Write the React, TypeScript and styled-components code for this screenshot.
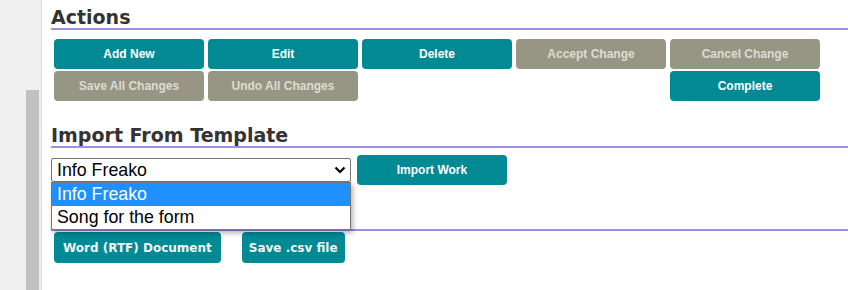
import React from "react"
import styled, { createGlobalStyle } from "styled-components"

const GlobalStyle = createGlobalStyle`
  html, body {
    margin: 0;
    padding: 0;
    background: #ffffff;
    overflow: hidden;
  }
  body {
    font-family: "Liberation Sans", Arial, sans-serif;
  }
`

const Page = styled.div`
  display: flex;
  height: 290px;
`

const Sidebar = styled.div`
  width: 42px;
  flex-shrink: 0;
  background: #f0f0f0;
  border-right: 1px solid #dedede;
  display: flex;
  flex-direction: column;
  align-items: flex-end;
  padding-top: 90px;
  box-sizing: border-box;
`

const ScrollThumb = styled.div`
  width: 13px;
  margin-right: 2px;
  flex: 1;
  background: #c1c1c1;
`

const Main = styled.main`
  flex: 1;
  padding-left: 9px;
  min-width: 0;
`

const SectionTitle = styled.h2<{ $gap: number }>`
  margin: ${(p) => p.$gap}px 0 0;
  height: 22px;
  font-family: "DejaVu Sans", Verdana, sans-serif;
  font-size: 19px;
  line-height: 22px;
  font-weight: bold;
  color: #333333;
  border-bottom: 2px solid #a48be2;
`

const ActionGrid = styled.div`
  display: grid;
  grid-template-columns: repeat(5, 150px);
  grid-auto-rows: 30px;
  column-gap: 4px;
  row-gap: 2px;
  margin: 9px 0 0 3px;
`

const ActionButton = styled.button<{ $muted?: boolean; $col?: number }>`
  grid-column: ${(p) => p.$col ?? "auto"};
  border: none;
  border-radius: 4px;
  padding: 0;
  background: ${(p) => (p.$muted ? "#979685" : "#018a94")};
  color: ${(p) => (p.$muted ? "#dcdcd2" : "#ffffff")};
  font-family: "Liberation Sans", Arial, sans-serif;
  font-size: 12px;
  font-weight: bold;
  cursor: pointer;
`

const ImportButton = styled(ActionButton)`
  width: 150px;
  height: 30px;
`

const ImportRow = styled.div`
  display: flex;
  align-items: center;
  gap: 6px;
  height: 30px;
  margin-top: 7px;
`

const SelectWrap = styled.div`
  position: relative;
  width: 300px;
`

const SelectBox = styled.div`
  display: flex;
  align-items: center;
  justify-content: space-between;
  height: 24px;
  box-sizing: border-box;
  padding: 0 4px 0 5px;
  border: 1px solid #767676;
  border-radius: 2px;
  background: #ffffff;
  font-size: 17.8px;
  color: #000000;
`

const OptionList = styled.ul`
  position: absolute;
  top: 24px;
  left: 0;
  width: 300px;
  box-sizing: border-box;
  margin: 0;
  padding: 0;
  list-style: none;
  background: #ffffff;
  border: 1px solid #767676;
  box-shadow: 2px 3px 5px rgba(0, 0, 0, 0.3);
  z-index: 5;
`

const OptionItem = styled.li<{ $active?: boolean }>`
  height: 23px;
  line-height: 23px;
  padding-left: 5px;
  font-size: 17.8px;
  background: ${(p) => (p.$active ? "#1e90ff" : "#ffffff")};
  color: ${(p) => (p.$active ? "#ffffff" : "#000000")};
`

const ExportRow = styled.div`
  display: flex;
  gap: 21px;
  margin: 1px 0 0 3px;
`

const ExportButton = styled.button<{ $pad?: number }>`
  height: 31px;
  padding: 0 ${(p) => p.$pad ?? 9}px;
  border: none;
  border-radius: 4px;
  background: #018a94;
  color: #f4f4f4;
  font-family: "DejaVu Sans", Verdana, sans-serif;
  font-size: 12px;
  font-weight: bold;
  cursor: pointer;
`

const Chevron = () => (
  <svg width="12" height="8" viewBox="0 0 12 8">
    <polyline points="1.5,1.5 6,6 10.5,1.5" fill="none" stroke="#000" strokeWidth="2.2" />
  </svg>
)

const App: React.FC = () => {
  return (
    <>
      <GlobalStyle />
      <Page>
        <Sidebar>
          <ScrollThumb />
        </Sidebar>
        <Main>
          <SectionTitle $gap={6}>Actions</SectionTitle>
          <ActionGrid>
            <ActionButton>Add New</ActionButton>
            <ActionButton>Edit</ActionButton>
            <ActionButton>Delete</ActionButton>
            <ActionButton $muted>Accept Change</ActionButton>
            <ActionButton $muted>Cancel Change</ActionButton>
            <ActionButton $muted>Save All Changes</ActionButton>
            <ActionButton $muted>Undo All Changes</ActionButton>
            <ActionButton $col={5}>Complete</ActionButton>
          </ActionGrid>

          <SectionTitle $gap={23}>Import From Template</SectionTitle>
          <ImportRow>
            <SelectWrap>
              <SelectBox>
                <span>Info Freako</span>
                <Chevron />
              </SelectBox>
              <OptionList>
                <OptionItem $active>Info Freako</OptionItem>
                <OptionItem>Song for the form</OptionItem>
              </OptionList>
            </SelectWrap>
            <ImportButton>Import Work</ImportButton>
          </ImportRow>

          {/* export heading sits under the open dropdown */}
          <SectionTitle $gap={22} />
          <ExportRow>
            <ExportButton>Word (RTF) Document</ExportButton>
            <ExportButton $pad={7}>Save .csv file</ExportButton>
          </ExportRow>
        </Main>
      </Page>
    </>
  )
}

export default App
